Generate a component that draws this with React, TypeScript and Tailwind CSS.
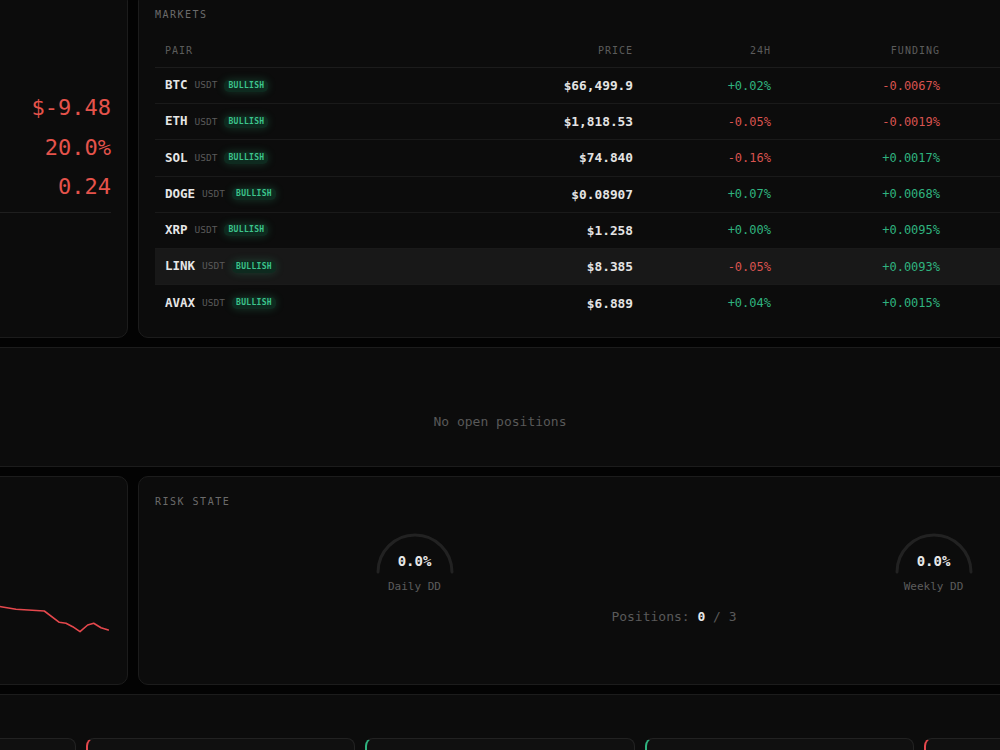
import type { ReactNode } from "react";

type Market = { sym: string; price: string; chg: string; fund: string; hover?: boolean };

const MARKETS: Market[] = [
  { sym: "BTC", price: "$66,499.9", chg: "+0.02%", fund: "-0.0067%" },
  { sym: "ETH", price: "$1,818.53", chg: "-0.05%", fund: "-0.0019%" },
  { sym: "SOL", price: "$74.840", chg: "-0.16%", fund: "+0.0017%" },
  { sym: "DOGE", price: "$0.08907", chg: "+0.07%", fund: "+0.0068%" },
  { sym: "XRP", price: "$1.258", chg: "+0.00%", fund: "+0.0095%" },
  { sym: "LINK", price: "$8.385", chg: "-0.05%", fund: "+0.0093%", hover: true },
  { sym: "AVAX", price: "$6.889", chg: "+0.04%", fund: "+0.0015%" },
];

const STATS = ["$-9.48", "20.0%", "0.24"];

const TRADES = ["win", "loss", "win", "win", "loss"];

// equity curve, x/y in svg units (panel content box starts at x=0)
const EQUITY =
  "0,45 24,57 54,50 84,65 114,75 144,83 174,88 194,91.7 209,94.3 237.3,96 252.3,107.3 259,108.3 265.7,111.7 273,116.7 280.7,110 286.7,108.3 294,112.7 301.3,115";

function tone(v: string) {
  return v.startsWith("-") ? "text-[#d9534f]" : "text-[#2fb37f]";
}

function Panel({ className = "", children }: { className?: string; children?: ReactNode }) {
  return (
    <div className={`rounded-[10px] border border-[#1c1c1c] bg-[#0c0c0c] p-4 ${className}`}>
      {children}
    </div>
  );
}

function Label({ children }: { children?: ReactNode }) {
  return (
    <div className="h-[14px] text-[10px] leading-[14px] tracking-[0.15em] text-[#6b6b6b] uppercase">
      {children}
    </div>
  );
}

function Gauge({ value, label }: { value: string; label: string }) {
  return (
    <div className="flex flex-col items-center">
      <div className="relative h-[42px] w-[80px]">
        <svg width="80" height="42" viewBox="0 0 80 42">
          <path
            d="M3 40 A37 37 0 0 1 77 40"
            fill="none"
            stroke="#222222"
            strokeWidth="3"
            strokeLinecap="round"
          />
        </svg>
        <span className="absolute inset-x-0 top-[20px] text-center text-[14px] leading-[18px] font-bold text-[#e8e8e8]">
          {value}
        </span>
      </div>
      <span className="mt-[6px] text-[11px] leading-[14px] text-[#5c5c5c]">{label}</span>
    </div>
  );
}

const COLS = "grid grid-cols-[346px_142px_138px_169px_1fr]";

function MarketsTable() {
  return (
    <div>
      <div
        className={`${COLS} h-[34px] items-center border-b border-[#1c1c1c] text-[10px] tracking-[0.1em] text-[#5c5c5c]`}
      >
        <div className="px-[10px]">PAIR</div>
        <div className="px-[10px] text-right">PRICE</div>
        <div className="px-[10px] text-right">24H</div>
        <div className="px-[10px] text-right">FUNDING</div>
        <div />
      </div>
      {MARKETS.map((m, i) => (
        <div
          key={m.sym}
          className={`${COLS} h-[36.2px] items-center ${i < MARKETS.length - 1 ? "border-b border-[#1a1a1a]" : ""} ${m.hover ? "bg-[#181818]" : ""}`}
        >
          <div className="flex items-center gap-[7px] px-[10px]">
            <span className="text-[12.5px] font-bold text-[#e6e6e6]">{m.sym}</span>
            <span className="text-[9.5px] text-[#5a5a5a]">USDT</span>
            <span className="rounded-[5px] bg-[#0e2a1f] px-[4px] text-[8px] leading-[12px] font-bold tracking-[0.04em] text-[#3cc48c] shadow-[0_0_8px_rgba(52,199,138,0.22)]">
              BULLISH
            </span>
          </div>
          <div className="px-[10px] text-right text-[12.8px] font-bold text-[#e4e4e4]">{m.price}</div>
          <div className={`px-[10px] text-right text-[12px] ${tone(m.chg)}`}>{m.chg}</div>
          <div className={`px-[10px] text-right text-[12px] ${tone(m.fund)}`}>{m.fund}</div>
          <div />
        </div>
      ))}
    </div>
  );
}

export default function App() {
  return (
    <div className="h-[750px] w-[1000px] overflow-hidden bg-[#030303] font-['DejaVu_Sans_Mono',monospace]">
      <div className="mt-[-9px] ml-[-210px] flex w-[1420px] flex-col gap-[9px]">
        {/* overview + markets */}
        <div className="grid h-[347px] grid-cols-[338px_1072px] gap-[10px]">
          <Panel>
            <Label />
            <div className="mt-[66px]">
              {STATS.map((s) => (
                <div key={s} className="flex h-[39.5px] items-center justify-end">
                  <span className="text-[22px] text-[#e5534b]">{s}</span>
                </div>
              ))}
            </div>
            <div className="mt-[5px] border-t border-[#1f1f1f]" />
          </Panel>
          <Panel>
            <Label>Markets</Label>
            <div className="mt-[12px]">
              <MarketsTable />
            </div>
          </Panel>
        </div>

        {/* positions */}
        <Panel className="h-[120px]">
          <Label />
          <div className="flex h-[72px] items-center justify-center pt-[16px] text-[13px] text-[#595959]">
            No open positions
          </div>
        </Panel>

        {/* equity + risk */}
        <div className="grid h-[209px] grid-cols-[338px_1072px] gap-[10px]">
          <Panel>
            <Label />
            <svg className="mt-[8px]" width="306" height="150" viewBox="0 0 306 150">
              <polyline
                points={EQUITY}
                fill="none"
                stroke="#e5484d"
                strokeWidth="1.6"
                strokeLinejoin="round"
                strokeLinecap="round"
              />
            </svg>
          </Panel>
          <Panel>
            <div className="pt-[2px]">
              <Label>Risk state</Label>
            </div>
            <div className="mt-[23px] flex justify-around">
              <Gauge value="0.0%" label="Daily DD" />
              <Gauge value="0.0%" label="Weekly DD" />
            </div>
            <div className="mt-[14px] text-center text-[13px] leading-[18px] text-[#5a5a5a]">
              Positions: <span className="font-bold text-[#e8e8e8]">0</span> / 3
            </div>
          </Panel>
        </div>

        {/* recent trades */}
        <Panel>
          <Label />
          <div className="mt-[13px] grid grid-cols-5 gap-[10px]">
            {TRADES.map((side, i) => (
              <div
                key={i}
                className={`h-[90px] rounded-lg border border-l-2 border-[#222222] bg-[#101010] ${side === "win" ? "border-l-[#2fb37f]" : "border-l-[#e5484d]"}`}
              />
            ))}
          </div>
        </Panel>
      </div>
    </div>
  );
}
